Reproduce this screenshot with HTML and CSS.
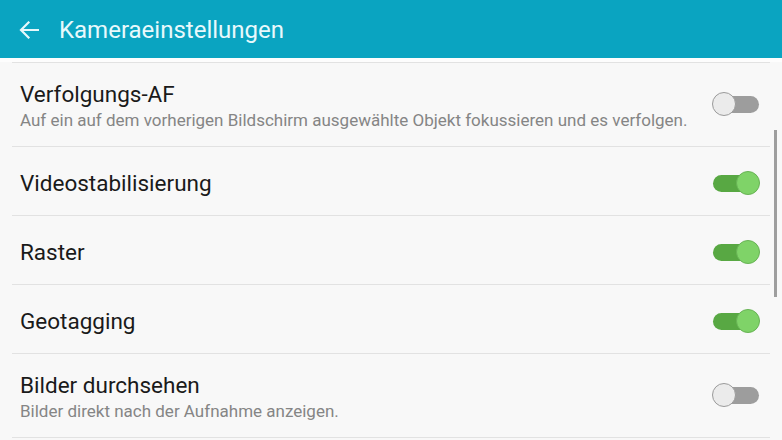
FILE: index.html
```html
<!DOCTYPE html>
<html lang="de">
<head>
<meta charset="utf-8">
<link rel="stylesheet" href="styles.css">
</head>
<body>
<header class="appbar">
  <svg class="back" width="20" height="18" viewBox="0 0 20 18"><path d="M19 9H2.5M9.5 1.5L2 9l7.5 7.5" fill="none" stroke="#e6f8fb" stroke-width="2.2" stroke-linecap="square"/></svg>
  <h1 class="title">Kameraeinstellungen</h1>
</header>
<div class="strip"></div>
<main class="list">
  <div class="row two">
    <div class="text">
      <div class="label">Verfolgungs-AF</div>
      <div class="desc">Auf ein auf dem vorherigen Bildschirm ausgewählte Objekt fokussieren und es verfolgen.</div>
    </div>
    <span class="switch off"><span class="knob"></span></span>
  </div>
  <div class="row">
    <div class="text"><div class="label">Videostabilisierung</div></div>
    <span class="switch on"><span class="knob"></span></span>
  </div>
  <div class="row">
    <div class="text"><div class="label">Raster</div></div>
    <span class="switch on"><span class="knob"></span></span>
  </div>
  <div class="row">
    <div class="text"><div class="label">Geotagging</div></div>
    <span class="switch on"><span class="knob"></span></span>
  </div>
  <div class="row two">
    <div class="text">
      <div class="label">Bilder durchsehen</div>
      <div class="desc">Bilder direkt nach der Aufnahme anzeigen.</div>
    </div>
    <span class="switch off"><span class="knob"></span></span>
  </div>
</main>
<div class="scrollbar"></div>
</body>
</html>
```
FILE: styles.css
```css
html, body {
  margin: 0;
  padding: 0;
  width: 782px;
  height: 440px;
  overflow: hidden;
  background: #f8f8f8;
  font-family: Roboto, "Noto Sans", sans-serif;
}
body { position: relative; }
.appbar {
  height: 58px;
  background: #0aa4c1;
  display: flex;
  align-items: center;
  padding-left: 19px;
  box-sizing: border-box;
}
.back { display: block; margin-top: 2px; }
.title {
  margin: 2px 0 0 20px;
  font-weight: 400;
  font-size: 24px;
  color: #e8f9fc;
}
.strip {
  height: 4px;
  background: #fdfdfd;
}
.list {
  margin: 0 12px;
  border-top: 1px solid #e2e2e2;
}
.row {
  display: flex;
  align-items: center;
  height: 68px;
  border-bottom: 1px solid #e2e2e2;
  padding: 0 11px 0 8px;
}
.row.two { height: 83px; }
.text { flex: 1; }
.two .text { padding-top: 3px; }
.label {
  font-size: 22.5px;
  color: #1a1a1a;
  line-height: 27px;
}
.row:not(.two) .label { margin-top: 4px; }
.desc {
  font-size: 17px;
  color: #858585;
  line-height: 21px;
  margin-top: 2px;
}
.switch {
  position: relative;
  width: 46px;
  height: 17px;
  border-radius: 9px;
  flex: none;
}
.switch.off { background: #9d9d9d; }
.switch.on { background: #58a843; margin-top: 4px; }
.knob {
  position: absolute;
  top: -4px;
  width: 24px;
  height: 24px;
  border-radius: 50%;
  box-sizing: border-box;
}
.off .knob {
  left: -1px;
  background: #ebebeb;
  border: 1px solid #9a9a9a;
}
.on .knob {
  right: -1px;
  background: #7fd368;
  border: 1px solid #68b355;
}
.scrollbar {
  position: absolute;
  left: 774px;
  top: 130px;
  width: 3px;
  height: 167px;
  background: #9e9e9e;
}
```
